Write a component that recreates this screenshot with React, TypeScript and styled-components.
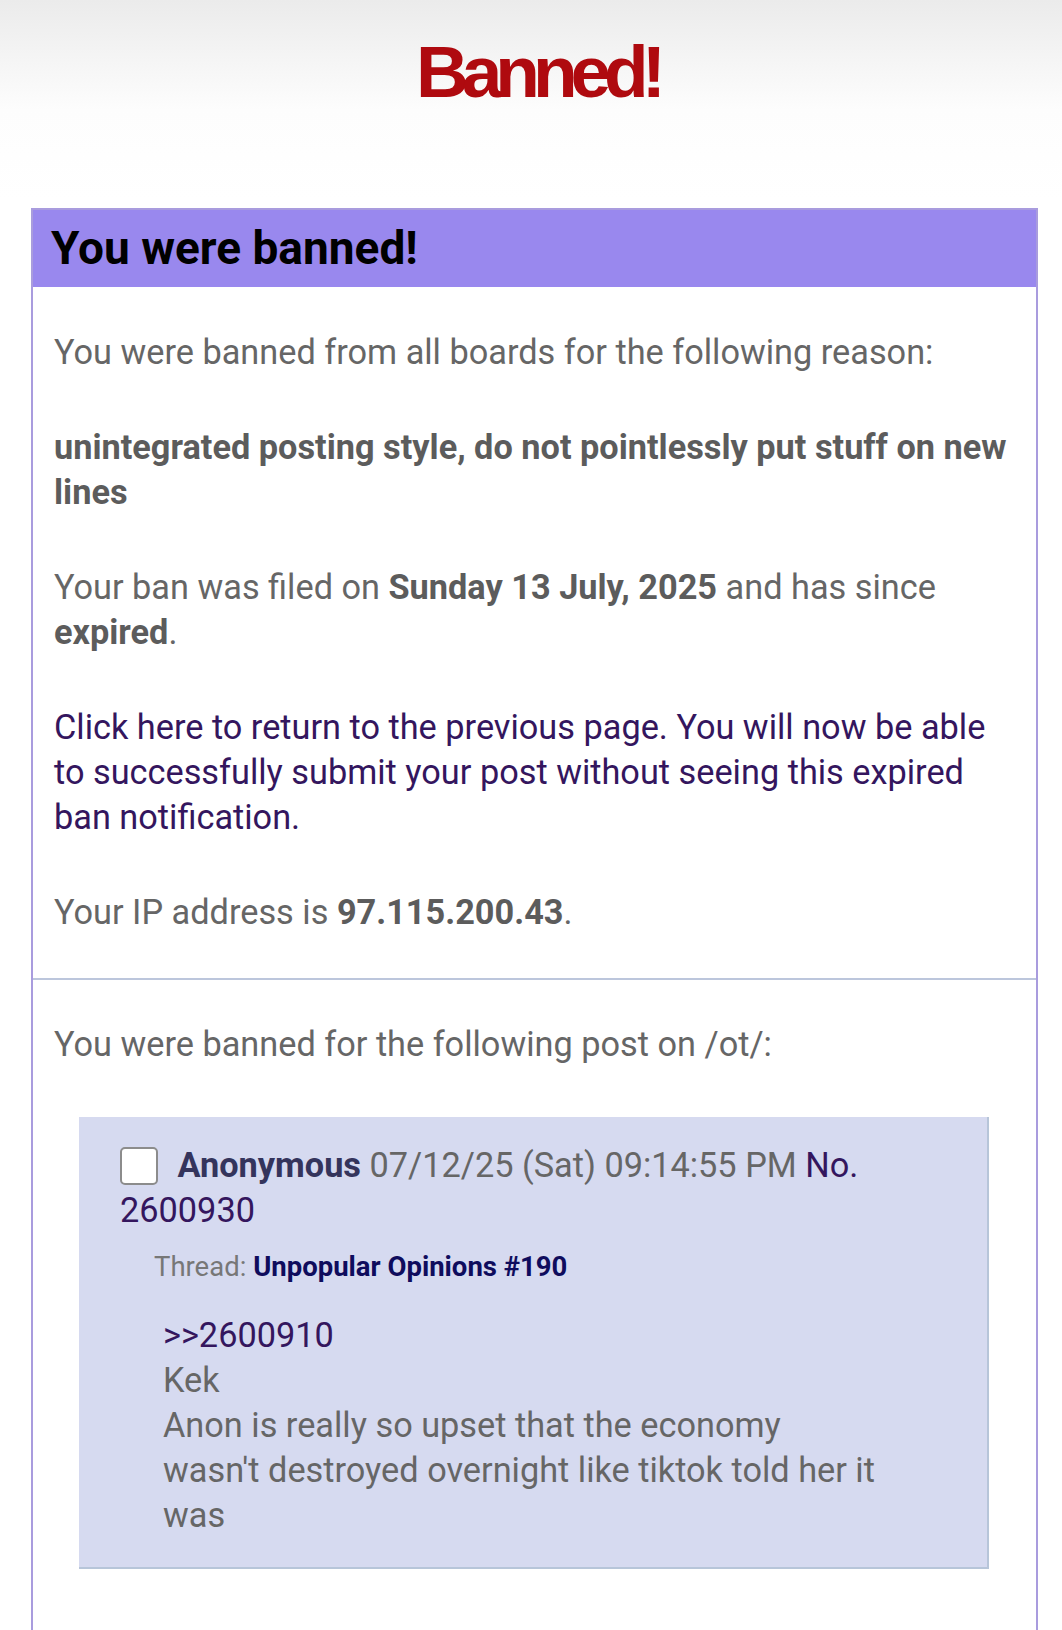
import styled, { createGlobalStyle } from 'styled-components';

const GlobalStyle = createGlobalStyle`
  html, body {
    margin: 0;
    padding: 0;
  }

  body {
    background: linear-gradient(#ebebeb, #fdfdfd 110px, #ffffff 200px) no-repeat #ffffff;
    font-family: Roboto, "Liberation Sans", Arial, sans-serif;
    color: #666666;
  }
`;

const Page = styled.div`
  padding: 0 24px 0 31px;
`;

const Title = styled.h1`
  margin: 35px 0 100px;
  padding-left: 6px;
  font-family: "Liberation Sans", Arial, sans-serif;
  font-size: 73px;
  line-height: 73px;
  font-weight: 700;
  letter-spacing: -7px;
  text-align: center;
  color: #af0a0f;
`;

const Box = styled.div`
  border: 2px solid #a99cde;
  border-bottom: none;
  background: #ffffff;
`;

const BoxBar = styled.h2`
  margin: 0;
  padding: 0 18px;
  height: 77px;
  line-height: 77px;
  background: #9988ee;
  color: #000000;
  font-size: 46px;
  font-weight: 700;
`;

const Section = styled.div<{ $last?: boolean }>`
  display: flex;
  flex-direction: column;
  gap: 50px;
  padding: ${p => (p.$last ? '42px 22px 200px 21px' : '43px 22px 43px 21px')};
  border-top: ${p => (p.$last ? '2px solid #bcc6dc' : 'none')};
`;

const Para = styled.p`
  margin: 0;
  font-size: 34.3px;
  line-height: 45px;
  color: #666666;

  b {
    font-weight: 700;
    color: #5c5c5c;
  }
`;

const Link = styled.a`
  color: #34165e;
  text-decoration: none;
`;

const Reply = styled.div`
  margin: 0 25px;
  padding: 26px 40px 29px 41px;
  background: #d6daf0;
  border-right: 2px solid #b7c5d9;
  border-bottom: 2px solid #b7c5d9;
`;

const PostInfo = styled.div`
  font-size: 34.3px;
  line-height: 45px;
  color: #666666;
`;

const Check = styled.span`
  display: inline-block;
  width: 34px;
  height: 34px;
  margin-right: 11px;
  vertical-align: -8px;
  border: 2px solid #8c8c8c;
  border-radius: 5px;
  background: #ffffff;
`;

const Name = styled.span`
  font-weight: 700;
  color: #34345c;
`;

const PostNum = styled.span`
  color: #34165e;
`;

const ThreadLine = styled.div`
  margin: 16px 0 0 34px;
  font-size: 27.5px;
  line-height: 36px;
  color: #777777;
`;

const ThreadTitle = styled.span`
  font-weight: 700;
  color: #0f0c5d;
`;

const Message = styled.blockquote`
  margin: 28px 0 0 43px;
  max-width: 713px;
  font-size: 34.3px;
  line-height: 45px;
  color: #666666;
`;

const QuoteLink = styled.span`
  color: #34165e;
`;

export default function App() {
  return (
    <>
      <GlobalStyle />
      <Page>
        <Title>Banned!</Title>
        <Box>
          <BoxBar>You were banned!</BoxBar>
          <Section>
            <Para>You were banned from all boards for the following reason:</Para>
            <Para>
              <b>unintegrated posting style, do not pointlessly put stuff on new lines</b>
            </Para>
            <Para>
              Your ban was filed on <b>Sunday 13 July, 2025</b> and has since <b>expired</b>.
            </Para>
            <Para>
              <Link href="#">
                Click here to return to the previous page. You will now be able to successfully
                submit your post without seeing this expired ban notification.
              </Link>
            </Para>
            <Para>
              Your IP address is <b>97.115.200.43</b>.
            </Para>
          </Section>
          <Section $last>
            <Para>You were banned for the following post on /ot/:</Para>
            <Reply>
              <PostInfo>
                <Check /> <Name>Anonymous</Name> 07/12/25 (Sat) 09:14:55 PM <PostNum>No.</PostNum>{' '}
                <PostNum>2600930</PostNum>
              </PostInfo>
              <ThreadLine>
                Thread: <ThreadTitle>Unpopular Opinions #190</ThreadTitle>
              </ThreadLine>
              <Message>
                <QuoteLink>&gt;&gt;2600910</QuoteLink>
                <br />
                Kek
                <br />
                Anon is really so upset that the economy wasn't destroyed overnight like tiktok told
                her it was
              </Message>
            </Reply>
          </Section>
        </Box>
      </Page>
    </>
  );
}
